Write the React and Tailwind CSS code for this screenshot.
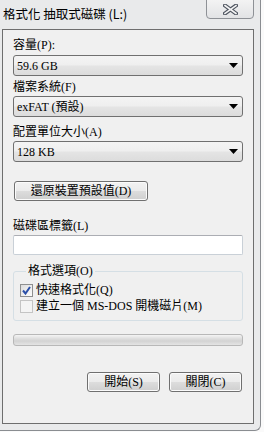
import React from "react";

const font = "font-['Liberation_Serif','Noto_Sans_CJK_TC',serif] text-[12px] leading-4 text-black";
const btnBg =
  "bg-[linear-gradient(to_bottom,#f2f2f2_0%,#ebebeb_50%,#dddddd_50%,#cfcfcf_100%)] shadow-[inset_0_0_0_1px_#fbfbfb]";

function Select({ value }) {
  return (
    <div className={`h-[21px] flex items-center justify-between rounded-[3px] border border-[#707070] pl-[3px] pr-[4px] bg-[linear-gradient(to_bottom,#f4f4f4_0%,#efefef_45%,#e4e4e4_55%,#dcdcdc_100%)] ${font}`}>
      <span>{value}</span>
      <svg width="9" height="5" viewBox="0 0 9 5">
        <path d="M0 0 H9 L4.5 5 Z" fill="#000" />
      </svg>
    </div>
  );
}

function Button({ children, className = "" }) {
  return (
    <button className={`h-[20px] flex items-center justify-center rounded-[3px] border border-[#707070] ${btnBg} ${font} ${className}`}>
      {children}
    </button>
  );
}

function Checkbox({ checked, disabled }) {
  return (
    <span
      className={`w-[13px] h-[13px] flex items-center justify-center border ${
        disabled ? "border-[#c4c4c4] bg-[#f4f4f4]" : "border-[#8e8f8f] bg-[linear-gradient(135deg,#dcdcdc,#fdfdfd)]"
      }`}
    >
      {checked && (
        <svg width="9" height="9" viewBox="0 0 9 9">
          <path d="M1 4.5 L3.5 7.5 L8 1" stroke="#2a4fa8" strokeWidth="2" fill="none" />
        </svg>
      )}
    </span>
  );
}

export default function App() {
  return (
    <div className="w-[264px] h-[432px] bg-[#fafafa] overflow-hidden">
      <div className="w-[261px] h-[431px] bg-[#e9eaeb] border-r border-b border-[#8a8d91] rounded-br-[6px] flex flex-col">
        <div className="h-[29px] flex items-start justify-between">
          <span className="mt-[6px] ml-[3px] font-['Noto_Sans_CJK_TC','Liberation_Sans',sans-serif] text-[12.5px] leading-4 text-black">
            格式化 抽取式磁碟 (L:)
          </span>
          <div className="mr-[6px] -mt-[2px] w-[48px] h-[21px] rounded-b-[4px] border border-[#8e9196] bg-[linear-gradient(to_bottom,#f4f4f4,#e2e3e5)] flex items-center justify-center">
            <svg width="15" height="11" viewBox="0 0 15 11" className="mt-[2px]">
              <path d="M2 1.5 L13 9.5 M13 1.5 L2 9.5" stroke="#4f5560" strokeWidth="4" strokeLinecap="square" />
              <path d="M2 1.5 L13 9.5 M13 1.5 L2 9.5" stroke="#f4f4f4" strokeWidth="1.6" strokeLinecap="square" />
            </svg>
          </div>
        </div>
        <div className="ml-[2px] w-[252px] h-[395px] border border-[#6e6e6e] bg-[#f0f0f0] pl-[10px] pr-[10px] flex flex-col">
          <div className={`mt-[7px] ${font}`}>容量(P):</div>
          <div className="mt-[2px]"><Select value="59.6 GB" /></div>
          <div className={`mt-[3px] ${font}`}>檔案系統(F)</div>
          <div className="mt-[1px]"><Select value="exFAT (預設)" /></div>
          <div className={`mt-[7px] ${font}`}>配置單位大小(A)</div>
          <div className="mt-[1px]"><Select value="128 KB" /></div>
          <Button className="mt-[19px] ml-[1px] w-[134px]">還原裝置預設值(D)</Button>
          <div className={`mt-[17px] ${font}`}>磁碟區標籤(L)</div>
          <input className="mt-[1px] h-[20px] rounded-[2px] border border-[#c9d0d7] border-t-[#abadb3] bg-white outline-none" />
          <fieldset className="mt-[8px] border border-[#d5dfe5] rounded-[3px] pl-[6px] pb-[6px] pt-[3px]">
            <legend className={`ml-[6px] px-[2px] ${font}`}>格式選項(O)</legend>
            <div className="flex flex-col">
              <label className={`h-[16px] flex items-center gap-[3px] ${font}`}>
                <Checkbox checked />
                快速格式化(Q)
              </label>
              <label className={`h-[16px] flex items-center gap-[3px] ${font} text-[#8d8d8d]`}>
                <Checkbox disabled />
                建立一個 MS-DOS 開機磁片(M)
              </label>
            </div>
          </fieldset>
          <div className="mt-[13px] h-[12px] rounded-[3px] border border-[#b8b8b8] bg-[linear-gradient(to_bottom,#f4f4f4,#dcdcdc_40%,#d3d3d3_60%,#e4e4e4)]" />
          <div className="mt-[26px] flex justify-end gap-[9px] pr-[1px]">
            <Button className="w-[73px]">開始(S)</Button>
            <Button className="w-[73px]">關閉(C)</Button>
          </div>
        </div>
      </div>
    </div>
  );
}
